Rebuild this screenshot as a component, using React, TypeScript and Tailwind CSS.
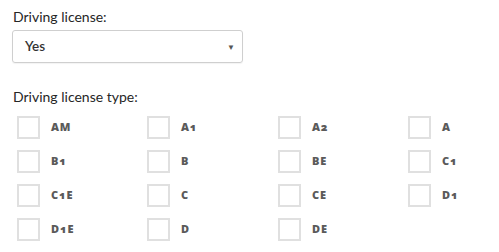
import React from "react"

const licenseTypes = ["AM", "A1", "A2", "A", "B1", "B", "BE", "C1", "C1E", "C", "CE", "D1", "D1E", "D", "DE"]

const LicenseCheckbox: React.FC<{ label: string }> = ({ label }) => (
	<label className="flex items-center h-[23px]">
		<span className="block w-[23px] h-[23px] border-2 border-[#e0e0e0] bg-white shrink-0" />
		<span
			className="ml-[11px] text-[11px] font-extrabold text-[#5a5a5a] tracking-[0.08em] [font-variant-numeric:oldstyle-nums]"
			style={{ fontFamily: '"Open Sans", sans-serif' }}>
			{label}
		</span>
	</label>
)

export default function App() {
	return (
		<div className="w-[499px] h-[252px] bg-white overflow-hidden" style={{ fontFamily: "Lato, sans-serif" }}>
			<div className="pt-[8px] pl-[13px]">
				<div className="text-[14px] text-[#262626] leading-[17px]">Driving license:</div>
				<div className="mt-[5px] ml-[-1px] w-[231px] h-[33px] border border-[#cfcfcf] rounded-[3px] flex items-center justify-between pl-[12px] pr-[7px] shadow-[0_1px_1px_rgba(0,0,0,0.05)]">
					<span className="text-[13.5px] font-semibold text-[#333]">Yes</span>
					<span className="text-[8px] text-[#555]">▼</span>
				</div>
			</div>
			<div className="mt-[25px] pl-[13px] text-[14px] text-[#262626] leading-[17px]">Driving license type:</div>
			<div className="mt-[11px] pl-[17px] grid grid-cols-[130px_131px_130px_1fr] gap-y-[11px]">
				{licenseTypes.map((t) => (
					<LicenseCheckbox key={t} label={t} />
				))}
			</div>
		</div>
	)
}
